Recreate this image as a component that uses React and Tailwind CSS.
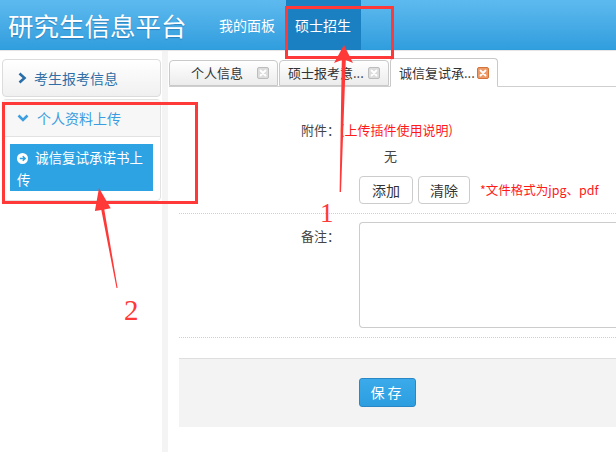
import React from "react";

const FONT = { fontFamily: '"Noto Sans CJK SC", "Noto Sans", sans-serif' };

function CloseBox({ active }) {
  return (
    <svg width="12" height="12" viewBox="0 0 12 12" className="shrink-0">
      <rect x="0.5" y="0.5" width="11" height="11" rx="1.5" fill={active ? "#ee9a66" : "#dcdcdc"} stroke={active ? "#d4733a" : "#bdbdbd"} />
      <path d="M3.5 3.5 L8.5 8.5 M8.5 3.5 L3.5 8.5" stroke="#fff" strokeWidth="1.8" strokeLinecap="round" />
    </svg>
  );
}

function Tab({ label, active, w, textPl }) {
  return (
    <div
      className={`flex items-center rounded-t-[4px] border border-[#c9c9c9] ${active ? "h-[29px] border-b-white bg-white -mb-px" : "h-[26px] bg-gradient-to-b from-white to-[#ececec]"}`}
      style={{ width: w }}
    >
      <span className="flex-1 truncate text-[13px] leading-[18px] text-[#333]" style={{ paddingLeft: textPl }}>{label}</span>
      <span className="mr-[8px]"><CloseBox active={active} /></span>
    </div>
  );
}

export default function App() {
  return (
    <div className="relative h-[452px] w-[616px] overflow-hidden bg-white" style={FONT}>
      {/* header */}
      <div className="flex h-[50px] items-stretch bg-gradient-to-b from-[#5dbaef] to-[#2f9ddd]">
        <div className="flex items-center pl-[8px] text-[25.5px] leading-none text-white [text-shadow:0_1px_1px_rgba(0,60,120,0.35)]">
          研究生信息平台
        </div>
        <div className="ml-[23px] flex items-stretch gap-[1px]">
          <div className="flex items-center px-[9.5px] text-[14px] text-white">我的面板</div>
          <div className="flex items-center bg-[#1b80c1] px-[9.5px] text-[14px] text-white">硕士招生</div>
        </div>
      </div>

      {/* body */}
      <div className="flex h-[402px] border-t border-[#e6e6e6] bg-white">
        {/* sidebar */}
        <div className="w-[162px] pl-[2px] pt-[8px]">
          <div className="flex h-[38px] w-[159px] items-center rounded-[4px] border border-[#dcdcdc] bg-gradient-to-b from-white to-[#f0f0f0] pl-[14px]">
            <svg width="10" height="12" viewBox="0 0 10 12" className="mr-[7px]">
              <path d="M2.5 1.5 L7.5 6 L2.5 10.5" fill="none" stroke="#2a6ea9" strokeWidth="2.6" />
            </svg>
            <span className="text-[14px] text-[#2d6fa6]">考生报考信息</span>
          </div>
          <div className="mt-[2px] w-[159px] rounded-[4px] border border-[#e2e2e2] bg-white">
            <div className="flex h-[37px] items-center border-b border-[#e2e2e2] bg-[#f7f7f7] pl-[14px]">
              <svg width="12" height="10" viewBox="0 0 12 10" className="mr-[8px]">
                <path d="M1.5 2.5 L6 7 L10.5 2.5" fill="none" stroke="#3d9fe0" strokeWidth="2.6" />
              </svg>
              <span className="text-[14px] text-[#3a9de0]">个人资料上传</span>
            </div>
            <div className="px-[7px] pb-[9px] pt-[7px]">
              <div className="h-[47px] bg-[#2ea3e4] pl-[7px] pr-[6px] pt-[2px] text-[13.5px] leading-[22px] text-white">
                <svg width="11" height="11" viewBox="0 0 12 12" className="mr-[7px] inline-block align-[-1px]">
                  <circle cx="6" cy="6" r="6" fill="#fff" />
                  <path d="M3 6 H8.5 M6.3 3.6 L8.8 6 L6.3 8.4" fill="none" stroke="#2ea3e4" strokeWidth="1.7" />
                </svg>
                诚信复试承诺书上传
              </div>
            </div>
          </div>
        </div>

        {/* separator */}
        <div className="w-[6px] bg-[#f4f4f4]" />

        {/* content */}
        <div className="flex-1">
          <div className="ml-[1px] mt-[8px] flex h-[28px] items-end gap-[1px] border-b border-[#cfcfcf]">
            <Tab label="个人信息" w={109} textPl={21} />
            <Tab label="硕士报考意..." w={110} textPl={8} />
            <Tab label="诚信复试承..." w={108} textPl={8} active />
          </div>

          <div className="pl-[11px]">
            {/* row 1 */}
            <div className="pt-[33px]">
              <div className="flex h-[20px] items-center">
                <span className="w-[161px] text-right text-[13px] text-[#444]">附件：</span>
                <span className="text-[13px] text-[#ff1a1a]">(上传插件使用说明)</span>
              </div>
              <div className="mt-[6px] flex h-[20px] items-center pl-[205px] text-[13px] text-[#444]">无</div>
              <div className="mt-[10px] flex items-center pl-[180px]">
                <button className="h-[28px] w-[54px] rounded-[4px] border border-[#cccccc] bg-white text-[14px] text-[#333]">添加</button>
                <button className="ml-[5px] h-[28px] w-[52px] rounded-[4px] border border-[#cccccc] bg-white text-[14px] text-[#333]">清除</button>
                <span className="ml-[10px] text-[12.5px] text-[#ff1a1a]">*文件格式为jpg、pdf</span>
              </div>
              <div className="mt-[9px] border-t border-dotted border-[#cfcfcf]" />
            </div>

            {/* row 2 */}
            <div className="flex">
              <span className="mt-[12px] h-[20px] w-[161px] text-right text-[13px] leading-[20px] text-[#444]">备注：</span>
              <div className="ml-[19px] mt-[8px] h-[106px] flex-1 rounded-l-[4px] border border-r-0 border-[#cccccc] bg-white" />
            </div>
            <div className="mt-[9px] border-t border-dotted border-[#cfcfcf]" />

            {/* footer */}
            <div className="mt-[20px] h-[69px] border-t border-[#dedede] bg-[#f3f3f3] pl-[180px] pt-[19px]">
              <button className="h-[29px] w-[57px] rounded-[3px] border border-[#2887c4] bg-gradient-to-b from-[#3aaaea] to-[#2c9ee0] text-[14px] tracking-[3px] text-white">保存</button>
            </div>
          </div>
        </div>
      </div>

      {/* annotations */}
      <svg className="pointer-events-none absolute left-0 top-0" width="616" height="452" viewBox="0 0 616 452">
        <rect x="286.5" y="7.5" width="106" height="50" fill="none" stroke="#ff3838" strokeWidth="3" />
        <rect x="3.5" y="103.5" width="193" height="99" fill="none" stroke="#ff3838" strokeWidth="3" />
        <polygon points="344,45 353,63 345.8,60 341,192 339.6,192 341.8,60 334,63" fill="#ff3838" />
        <polygon points="99,188 110.7,208.3 104.3,209.4 117.6,288 116.5,288 101.3,210 94.9,211.1" fill="#ff3838" />
      </svg>
      <span className="pointer-events-none absolute left-[320px] top-[198px] text-[27px] leading-[30px] text-[#ff3838]" style={{ fontFamily: '"Liberation Serif", serif' }}>1</span>
      <span className="pointer-events-none absolute left-[124px] top-[294px] text-[29px] leading-[32px] text-[#ff3838]" style={{ fontFamily: '"Liberation Serif", serif' }}>2</span>
    </div>
  );
}
